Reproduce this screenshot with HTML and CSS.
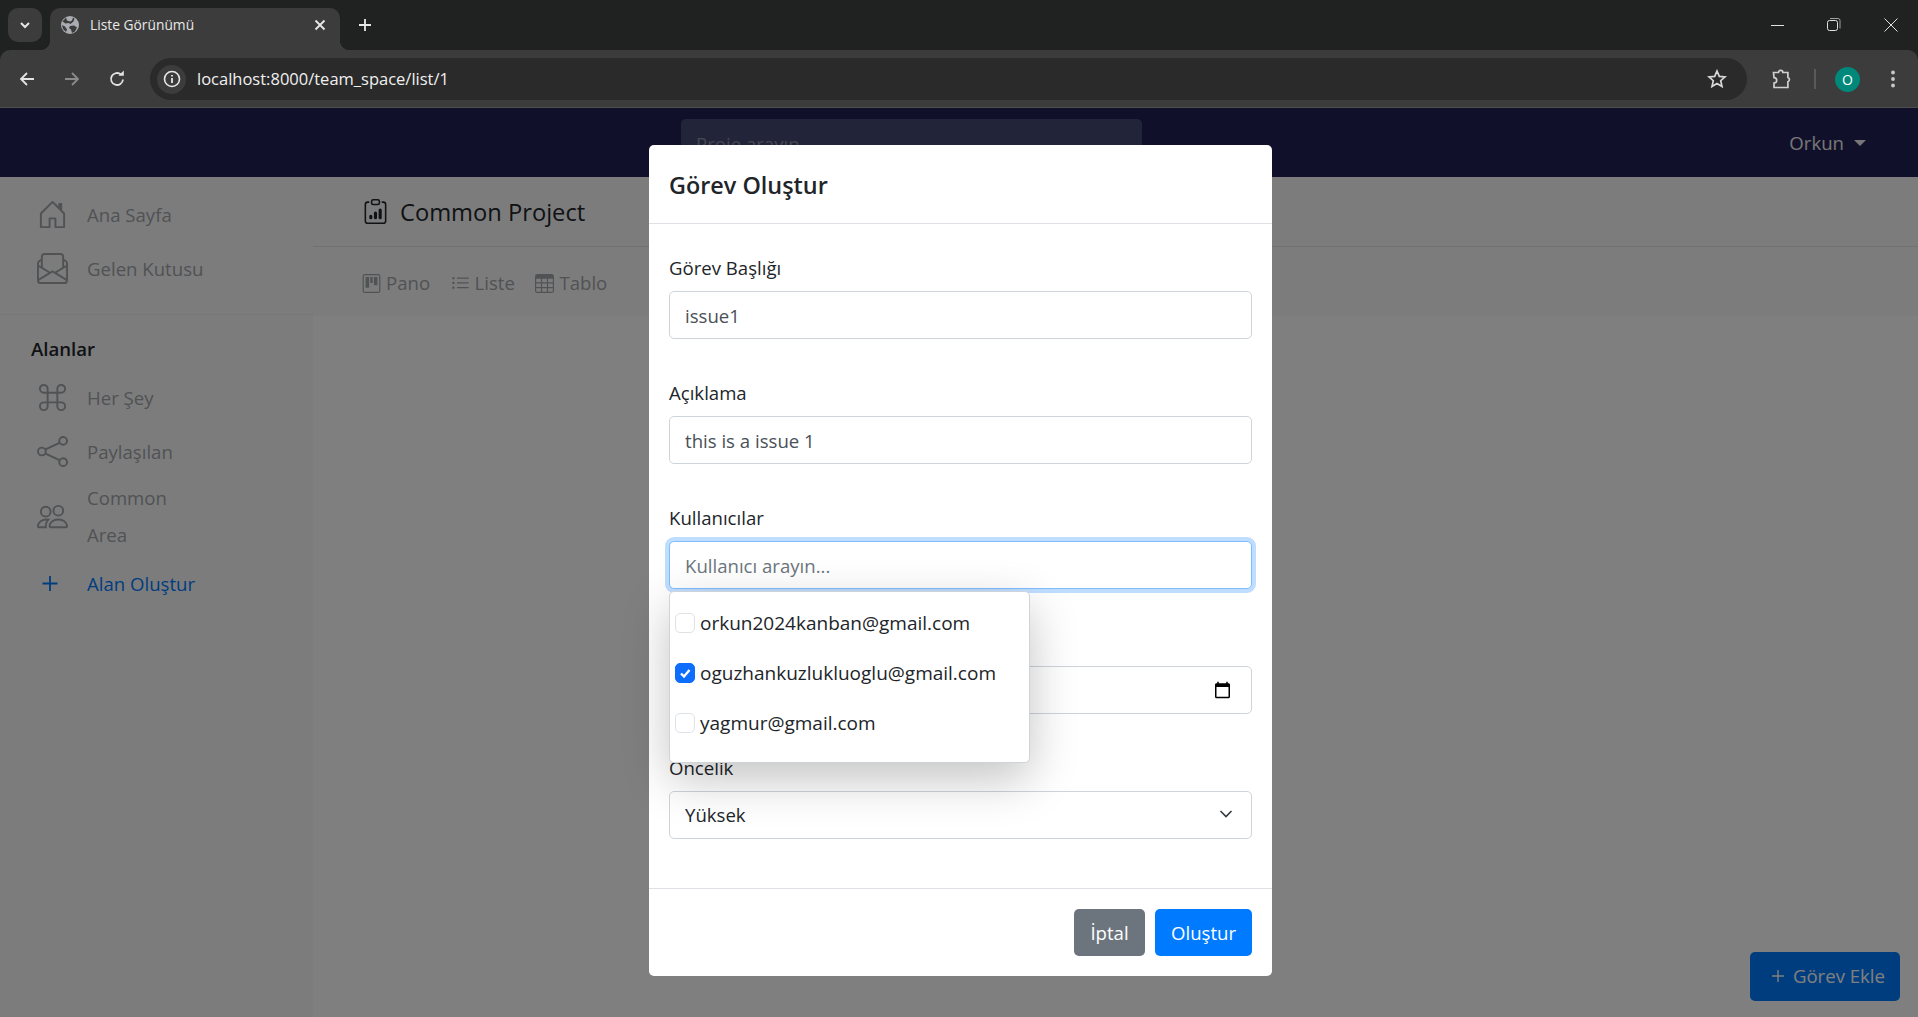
FILE: index.html
```html
<!DOCTYPE html>
<html lang="tr">
<head>
    <meta charset="UTF-8">
    <meta name="viewport" content="width=device-width, initial-scale=1.0">
    <title>Liste Görünümü</title>
    <link rel="stylesheet" href="styles.css">
</head>
<body>

    <!-- Browser window chrome -->
    <div class="tabstrip">
        <div class="tab-search">
            <svg width="14" height="14" viewBox="0 0 14 14"><path d="M3 5l4 4 4-4" fill="none" stroke="#e6e6e6" stroke-width="2"/></svg>
        </div>
        <div class="tab">
            <svg class="tab-favicon" width="18" height="18" viewBox="0 0 18 18">
                <circle cx="9" cy="9" r="9" fill="#a9adb2"/>
                <path d="M5 1.500l1 3 3 1 2-1 1-3 1.500 1-1 3-3 2.500-2-1-3 .5-3-2zM9 10l4-.5 3 2-2 4-3 1.500-1-3.500-2-1.500zM1 9l3 1.500 2 3-1 2.500-3-3z" fill="#3c3c3c"/>
            </svg>
            <span class="tab-title">Liste Görünümü</span>
            <svg class="tab-close" width="12" height="12" viewBox="0 0 12 12"><path d="M1.500 1.500l9 9M10.500 1.500l-9 9" stroke="#e8e8e8" stroke-width="1.800"/></svg>
        </div>
        <svg class="tab-new" width="14" height="14" viewBox="0 0 14 14"><path d="M7 1v12M1 7h12" stroke="#e8e8e8" stroke-width="1.800"/></svg>
        <div class="window-controls">
            <svg width="14" height="14" viewBox="0 0 14 14"><path d="M0 7.500h13" stroke="#e0e0e0"/></svg>
            <svg width="14" height="14" viewBox="0 0 14 14"><rect x=".5" y="2.500" width="10" height="10" rx="2" fill="none" stroke="#e0e0e0"/><path d="M3 .5h8a2 2 0 0 1 2 2v8" fill="none" stroke="#a0a0a0"/></svg>
            <svg width="14" height="14" viewBox="0 0 14 14"><path d="M.5.5l13 13M13.500.5l-13 13" stroke="#e0e0e0"/></svg>
        </div>
    </div>
    <div class="toolbar">
        <svg class="tool-back" width="18" height="18" viewBox="0 0 18 18"><path d="M16 9H3M9 3L3 9l6 6" fill="none" stroke="#e3e3e3" stroke-width="1.800"/></svg>
        <svg class="tool-forward" width="18" height="18" viewBox="0 0 18 18"><path d="M2 9h13M9 3l6 6-6 6" fill="none" stroke="#8b8b8b" stroke-width="1.800"/></svg>
        <svg class="tool-reload" width="18" height="18" viewBox="0 0 18 18"><path d="M15 9.500A6 6 0 1 1 13 4.500" fill="none" stroke="#e3e3e3" stroke-width="1.800"/><path d="M10.500 5.800h5.300V.5z" fill="#e3e3e3"/></svg>
        <div class="urlbar">
            <div class="url-info">
                <svg width="18" height="18" viewBox="0 0 18 18"><circle cx="9" cy="9" r="7.500" fill="none" stroke="#e8e8e8" stroke-width="1.600"/><path d="M9 8v5M9 5v1.600" stroke="#e8e8e8" stroke-width="1.800"/></svg>
            </div>
            <span class="url-text">localhost:8000/team_space/list/1</span>
            <svg class="url-star" width="20" height="20" viewBox="0 0 20 20"><path d="M10 2l2.300 5.400 5.700.5-4.300 3.800 1.300 5.700L10 14.400l-5 3 1.300-5.700L2 7.900l5.700-.5z" fill="none" stroke="#d8d8d8" stroke-width="1.700"/></svg>
        </div>
        <svg class="tool-ext" width="20" height="20" viewBox="0 0 20 20"><path d="M1.500 3.500h5a2.200 2.200 0 0 1 4.400 0h5v5a2.200 2.200 0 0 1 0 4.200v5.800H2v-4.500a2.700 2.700 0 0 0 0-5.400z" fill="none" stroke="#d0d0d0" stroke-width="1.700"/></svg>
        <div class="tool-sep"></div>
        <div class="avatar">O</div>
        <svg class="tool-menu" width="6" height="18" viewBox="0 0 6 18"><circle cx="3" cy="2.500" r="1.900" fill="#c8c8c8"/><circle cx="3" cy="9" r="1.900" fill="#c8c8c8"/><circle cx="3" cy="15.500" r="1.900" fill="#c8c8c8"/></svg>
    </div>

    <!-- Page -->
    <div class="page">
        <nav class="navbar">
            <input class="nav-search" type="text" placeholder="Proje arayın">
            <div class="nav-user">Orkun <span class="caret"></span></div>
        </nav>

        <div class="layout">
            <aside class="sidebar">
                <div class="side-top">
                    <a class="side-link">
                        <svg class="side-icon" viewBox="0 0 16 16"><path d="M8.354 1.146a.5.5 0 0 0-.708 0l-6 6A.5.5 0 0 0 1.500 7.500v7a.5.5 0 0 0 .5.5h4.500a.5.5 0 0 0 .5-.5v-4h2v4a.5.5 0 0 0 .5.5H14a.5.5 0 0 0 .5-.5v-7a.5.5 0 0 0-.146-.354L13 5.793V2.500a.5.5 0 0 0-.5-.5h-1a.5.5 0 0 0-.5.5v1.293L8.354 1.146zM2.500 14V7.707l5.500-5.500 5.500 5.500V14H10v-4a.5.5 0 0 0-.5-.5h-3a.5.5 0 0 0-.5.5v4H2.500z"/></svg>
                        <span>Ana Sayfa</span>
                    </a>
                    <a class="side-link">
                        <svg class="side-icon" viewBox="0 0 16 16"><path d="M4 0a2 2 0 0 0-2 2v1.133l-.941.502A2 2 0 0 0 0 5.400V14a2 2 0 0 0 2 2h12a2 2 0 0 0 2-2V5.400a2 2 0 0 0-1.059-1.765L14 3.133V2a2 2 0 0 0-2-2H4Zm10 4.267.47.25A1 1 0 0 1 15 5.400v.817l-1 .6v-2.550Zm-1 3.150-3.750 2.250L8 8.917l-1.250.75L3 7.417V2a1 1 0 0 1 1-1h8a1 1 0 0 1 1 1v5.417Zm-11-.6-1-.6V5.400a1 1 0 0 1 .53-.882L2 4.267v2.550Zm13 .566v5.734l-4.778-2.867L15 7.383Zm-.035 6.880A1 1 0 0 1 14 15H2a1 1 0 0 1-.965-.738L8 10.083l6.965 4.180ZM1 13.116V7.383l4.778 2.867L1 13.117Z"/></svg>
                        <span>Gelen Kutusu</span>
                    </a>
                </div>
                <div class="side-spaces">
                    <h6 class="side-heading">Alanlar</h6>
                    <a class="side-link">
                        <svg class="side-icon" viewBox="0 0 16 16"><path d="M3.500 2A1.500 1.500 0 0 1 5 3.500V5H3.500a1.500 1.500 0 1 1 0-3zM6 5V3.500A2.500 2.500 0 1 0 3.500 6H5v4H3.500A2.500 2.500 0 1 0 6 12.500V11h4v1.500a2.500 2.500 0 1 0 2.500-2.500H11V6h1.500A2.500 2.500 0 1 0 10 3.500V5H6zm4 1v4H6V6h4zm1-1V3.500A1.500 1.500 0 1 1 12.500 5H11zm0 6h1.500a1.500 1.500 0 1 1-1.500 1.500V11zm-6 0v1.500A1.500 1.500 0 1 1 3.500 11H5z"/></svg>
                        <span>Her Şey</span>
                    </a>
                    <a class="side-link">
                        <svg class="side-icon" viewBox="0 0 16 16"><path d="M13.500 1a1.500 1.500 0 1 0 0 3 1.500 1.500 0 0 0 0-3zM11 2.500a2.500 2.500 0 1 1 .603 1.628l-6.718 3.120a2.499 2.499 0 0 1 0 1.504l6.718 3.120a2.500 2.500 0 1 1-.488.876l-6.718-3.120a2.500 2.500 0 1 1 0-3.256l6.718-3.120A2.500 2.500 0 0 1 11 2.500zm-8.500 4a1.500 1.500 0 1 0 0 3 1.500 1.500 0 0 0 0-3zm11 5.500a1.500 1.500 0 1 0 0 3 1.500 1.500 0 0 0 0-3z"/></svg>
                        <span>Paylaşılan</span>
                    </a>
                    <a class="side-link side-link-wrap">
                        <svg class="side-icon" viewBox="0 0 16 16"><path d="M15 14s1 0 1-1-1-4-5-4-5 3-5 4 1 1 1 1h8Zm-7.978-1A.261.261 0 0 1 7 12.996c.001-.264.167-1.030.76-1.720C8.312 10.629 9.282 10 11 10c1.717 0 2.687.63 3.240 1.276.593.69.758 1.457.76 1.720l-.008.002a.274.274 0 0 1-.014.002H7.022ZM11 7a2 2 0 1 0 0-4 2 2 0 0 0 0 4Zm3-2a3 3 0 1 1-6 0 3 3 0 0 1 6 0ZM6.936 9.280a5.880 5.880 0 0 0-1.230-.247A7.350 7.350 0 0 0 5 9c-4 0-5 3-5 4 0 .667.333 1 1 1h4.216A2.238 2.238 0 0 1 5 13c0-1.010.377-2.042 1.090-2.904.243-.294.526-.569.846-.816ZM4.920 10A5.493 5.493 0 0 0 4 13H1c0-.26.164-1.030.76-1.724.545-.636 1.492-1.256 3.160-1.275ZM1.500 5.500a3 3 0 1 1 6 0 3 3 0 0 1-6 0Zm3-2a2 2 0 1 0 0 4 2 2 0 0 0 0-4Z"/></svg>
                        <span>Common<br>Area</span>
                    </a>
                    <a class="side-link side-link-new">
                        <svg class="side-icon" viewBox="0 0 31 31"><path d="M13 8v15M5.500 15.500h15" stroke="#007bff" stroke-width="1.800" fill="none"/></svg>
                        <span>Alan Oluştur</span>
                    </a>
                </div>
            </aside>

            <main class="main">
                <div class="project-head">
                    <svg class="project-icon" viewBox="0 0 16 16">
                        <path d="M4 11a1 1 0 1 1 2 0v1a1 1 0 1 1-2 0v-1zm6-4a1 1 0 1 1 2 0v5a1 1 0 1 1-2 0V7zM7 9a1 1 0 0 1 2 0v3a1 1 0 1 1-2 0V9z"/>
                        <path d="M4 1.500H3a2 2 0 0 0-2 2V14a2 2 0 0 0 2 2h10a2 2 0 0 0 2-2V3.500a2 2 0 0 0-2-2h-1v1h1a1 1 0 0 1 1 1V14a1 1 0 0 1-1 1H3a1 1 0 0 1-1-1V3.500a1 1 0 0 1 1-1h1v-1z"/>
                        <path d="M9.500 1a.5.5 0 0 1 .5.5v1a.5.5 0 0 1-.5.5h-3a.5.5 0 0 1-.5-.5v-1a.5.5 0 0 1 .5-.5h3zm-3-1A1.500 1.500 0 0 0 5 1.500v1A1.500 1.500 0 0 0 6.500 4h3A1.500 1.500 0 0 0 11 2.500v-1A1.500 1.500 0 0 0 9.500 0h-3z"/>
                    </svg>
                    <span class="project-name">Common Project</span>
                </div>
                <div class="views">
                    <a class="view-link">
                        <svg class="view-icon" viewBox="0 0 16 16"><path d="M13.500 1a1 1 0 0 1 1 1v12a1 1 0 0 1-1 1h-11a1 1 0 0 1-1-1V2a1 1 0 0 1 1-1h11zm-11-1a2 2 0 0 0-2 2v12a2 2 0 0 0 2 2h11a2 2 0 0 0 2-2V2a2 2 0 0 0-2-2h-11z"/><path d="M3 2.500h3v9H3zM7 2.500h2v5H7zM10 2.500h3v7h-3z"/></svg>
                        Pano
                    </a>
                    <a class="view-link">
                        <svg class="view-icon" viewBox="0 0 16 16"><path d="M5 11.500a.5.5 0 0 1 .5-.5h9a.5.5 0 0 1 0 1h-9a.5.5 0 0 1-.5-.5zm0-4a.5.5 0 0 1 .5-.5h9a.5.5 0 0 1 0 1h-9a.5.5 0 0 1-.5-.5zm0-4a.5.5 0 0 1 .5-.5h9a.5.5 0 0 1 0 1h-9a.5.5 0 0 1-.5-.5zm-3 1a1 1 0 1 0 0-2 1 1 0 0 0 0 2zm0 4a1 1 0 1 0 0-2 1 1 0 0 0 0 2zm0 4a1 1 0 1 0 0-2 1 1 0 0 0 0 2z"/></svg>
                        Liste
                    </a>
                    <a class="view-link">
                        <svg class="view-icon" viewBox="0 0 16 16"><path d="M0 2a2 2 0 0 1 2-2h12a2 2 0 0 1 2 2v12a2 2 0 0 1-2 2H2a2 2 0 0 1-2-2V2zm15 2h-4v3h4V4zm0 4h-4v3h4V8zm0 4h-4v3h3a1 1 0 0 0 1-1v-2zm-5 3v-3H6v3h4zm-5 0v-3H1v2a1 1 0 0 0 1 1h3zm-4-4h4V8H1v3zm0-4h4V4H1v3zm5-3v3h4V4H6zm4 4H6v3h4V8z"/></svg>
                        Tablo
                    </a>
                </div>
            </main>
        </div>

        <button class="add-task" type="button">
            <svg width="14" height="14" viewBox="0 0 14 14"><path d="M7 1v12M1 7h12" stroke="#fff" stroke-width="1.400"/></svg>
            Görev Ekle
        </button>

        <!-- Create task modal -->
        <div class="backdrop">
            <div class="modal">
                <div class="modal-header">
                    <h5 class="modal-title">Görev Oluştur</h5>
                </div>
                <form class="modal-body">
                    <div class="form-group">
                        <label class="form-label" for="title">Görev Başlığı</label>
                        <input class="form-control" id="title" type="text" value="issue1">
                    </div>
                    <div class="form-group">
                        <label class="form-label" for="desc">Açıklama</label>
                        <input class="form-control" id="desc" type="text" value="this is a issue 1">
                    </div>
                    <div class="form-group users-group">
                        <label class="form-label" for="users">Kullanıcılar</label>
                        <input class="form-control is-focus" id="users" type="text" placeholder="Kullanıcı arayın...">
                        <div class="user-menu">
                            <label class="user-item"><span class="check"></span>orkun2024kanban@gmail.com</label>
                            <label class="user-item">
                                <span class="check is-checked"><svg width="14" height="14" viewBox="0 0 14 14"><path d="M3 7.500l3 3 5.500-6.500" fill="none" stroke="#fff" stroke-width="2.400"/></svg></span>oguzhankuzlukluoglu@gmail.com
                            </label>
                            <label class="user-item"><span class="check"></span>yagmur@gmail.com</label>
                        </div>
                    </div>
                    <div class="form-group">
                        <!-- label of this field sits under the open menu -->
                        <div class="form-label"></div>
                        <input class="form-control date-control" id="due" type="date">
                    </div>
                    <div class="form-group">
                        <label class="form-label" for="priority">Öncelik</label>
                        <div class="select-wrap">
                            <select class="form-control form-select" id="priority">
                                <option>Yüksek</option>
                                <option>Orta</option>
                                <option>Düşük</option>
                            </select>
                            <svg class="select-arrow" width="16" height="16" viewBox="0 0 16 16"><path d="M2.500 5l5.500 5.500L13.500 5" fill="none" stroke="#343a40" stroke-width="1.600"/></svg>
                        </div>
                    </div>
                </form>
                <div class="modal-footer">
                    <button class="btn btn-secondary" type="button">İptal</button>
                    <button class="btn btn-primary" type="button">Oluştur</button>
                </div>
            </div>
        </div>
    </div>

</body>
</html>
```
FILE: styles.css
```css
* {
    box-sizing: border-box;
}

html, body {
    height: 100%;
}

body {
    margin: 0;
    overflow: hidden;
    font-family: "Open Sans", "Noto Sans", sans-serif;
    font-size: 18.6px;
    line-height: 30px;
    color: #212529;
    background-color: #202221;
}

/* Browser chrome */
.tabstrip {
    position: relative;
    display: flex;
    align-items: flex-end;
    height: 50px;
    padding-left: 8px;
    background-color: #202221;
}

.tab-search {
    display: flex;
    align-items: center;
    justify-content: center;
    width: 34px;
    height: 34px;
    margin-bottom: 8px;
    border-radius: 10px;
    background-color: #3c3c3c;
}

.tab {
    position: relative;
    display: flex;
    align-items: center;
    width: 290px;
    height: 42px;
    margin-left: 8px;
    padding: 0 14px 8px 11px;
    border-radius: 10px 10px 0 0;
    background-color: #3c3c3c;
}

.tab::before,
.tab::after {
    content: "";
    position: absolute;
    bottom: 0;
    width: 10px;
    height: 10px;
}

.tab::before {
    left: -10px;
    background: radial-gradient(circle at 0 0, transparent 10px, #3c3c3c 10.5px);
}

.tab::after {
    right: -10px;
    background: radial-gradient(circle at 100% 0, transparent 10px, #3c3c3c 10.5px);
}

.tab-title {
    flex: 1;
    margin-left: 11px;
    font-size: 13.800px;
    color: #e8e8e8;
}

.tab-new {
    align-self: center;
    margin: 0 0 0 18px;
}

.window-controls {
    display: flex;
    gap: 43px;
    margin-left: auto;
    padding: 0 20px 18px 0;
    align-self: flex-end;
}

.window-controls svg:first-child {
    margin-right: -1px;
}

.toolbar {
    display: flex;
    align-items: center;
    height: 58px;
    padding: 1px 16px 0 18px;
    border-radius: 10px 10px 0 0;
    border-bottom: 1px solid #4e4e4e;
    background-color: #3c3c3c;
}

.tool-forward,
.tool-reload {
    margin-left: 27px;
}

.urlbar {
    display: flex;
    align-items: center;
    width: 1597px;
    height: 42px;
    margin-left: 24px;
    padding: 0 20px 0 7px;
    border-radius: 21px;
    background-color: #2a2a2a;
}

.url-info {
    display: flex;
    align-items: center;
    justify-content: center;
    width: 29px;
    height: 29px;
    border-radius: 50%;
    background-color: #3c3c3c;
}

.url-text {
    flex: 1;
    margin-left: 11px;
    font-size: 16.500px;
    color: #f0f0f0;
}

.tool-ext {
    margin-left: 25px;
}

.tool-sep {
    width: 2px;
    height: 20px;
    margin-left: 22px;
    background-color: #5a5a5a;
}

.avatar {
    width: 25px;
    height: 25px;
    margin-left: 19px;
    border-radius: 50%;
    font-size: 14px;
    line-height: 25px;
    text-align: center;
    color: #fff;
    background-color: #00897b;
}

.tool-menu {
    margin-left: 30px;
}

/* Page */
.page {
    position: relative;
    height: 909px;
    overflow: hidden;
    display: flex;
    flex-direction: column;
}

.navbar {
    display: grid;
    grid-template-columns: 681px 461px 1fr;
    flex: none;
    height: 69px;
    background-color: #222054;
}

.nav-search {
    grid-column: 2;
    height: 48px;
    margin-top: 11px;
    padding: 0 15px;
    border: 0;
    border-radius: 5px;
    font: inherit;
    color: #fff;
    background-color: #444874;
}

.nav-search::placeholder {
    color: #8c8f9f;
}

.nav-user {
    grid-column: 3;
    justify-self: end;
    display: flex;
    align-items: center;
    gap: 10px;
    padding-right: 52px;
    color: #eee;
}

.caret {
    width: 0;
    height: 0;
    border-top: 6px solid #eee;
    border-left: 6px solid transparent;
    border-right: 6px solid transparent;
}

.layout {
    display: flex;
    flex: 1;
    min-height: 0;
    background-color: #fff;
}

.sidebar {
    flex: none;
    width: 313px;
    background-color: #f8f9fa;
}

.side-top {
    padding: 10px 0 18px;
    border-bottom: 1px solid #eceeef;
}

.side-spaces {
    padding-top: 19px;
}

.side-heading {
    margin: 0 0 6px;
    padding-left: 31px;
    font-size: 18.6px;
    font-weight: 600;
    line-height: 30px;
    color: #212529;
}

.side-link {
    display: flex;
    align-items: center;
    height: 54.500px;
    padding-left: 37px;
    line-height: 37px;
    color: #a2a5a8;
}

.side-link-wrap {
    height: auto;
    padding-bottom: 3px;
}

.side-link-new {
    color: #007bff;
}

.side-icon {
    flex: none;
    width: 31px;
    height: 31px;
    margin-right: 19px;
    fill: #a2a5a8;
}

.main {
    flex: 1;
    display: flex;
    flex-direction: column;
}

.project-head {
    display: flex;
    align-items: center;
    flex: none;
    height: 70px;
    padding-left: 50px;
    border-bottom: 1px solid #dee2e6;
    background-color: #f8f9fa;
}

.project-icon {
    width: 25px;
    height: 25px;
    fill: #212529;
}

.project-name {
    margin-left: 12px;
    font-size: 23.700px;
    color: #212529;
}

.views {
    display: flex;
    gap: 20.500px;
    flex: none;
    height: 69px;
    padding: 17px 0 0 49px;
    background-color: #f8f9fa;
}

.view-link {
    display: flex;
    align-items: center;
    gap: 5px;
    height: 38px;
    color: #a2a5a8;
}

.view-icon {
    width: 19px;
    height: 19px;
    fill: #a2a5a8;
}

.add-task {
    position: absolute;
    right: 18px;
    bottom: 16px;
    display: flex;
    align-items: center;
    gap: 8px;
    height: 49px;
    padding: 0 15px 2px 21px;
    border: 0;
    border-radius: 5px;
    font: inherit;
    color: #fff;
    background-color: #007bff;
}

/* Modal */
.backdrop {
    position: absolute;
    inset: 0;
    display: flex;
    justify-content: center;
    padding: 37px 0 0 3px;
    background-color: rgba(0, 0, 0, 0.5);
}

.modal {
    width: 623px;
    height: 831px;
    display: flex;
    flex-direction: column;
    border-radius: 5px;
    background-color: #fff;
}

.modal-header {
    flex: none;
    height: 79px;
    padding: 22px 20px 0;
    border-bottom: 1px solid #dee2e6;
}

.modal-title {
    margin: 0;
    font-size: 23.400px;
    font-weight: 600;
    line-height: 37px;
}

.modal-body {
    flex: 1;
    padding: 29px 20px 0;
}

.form-group {
    margin-bottom: 39px;
}

.users-group {
    position: relative;
}

.form-label {
    display: block;
    height: 30px;
    margin-bottom: 8px;
}

.form-control {
    display: block;
    width: 100%;
    height: 48px;
    padding: 0 15px;
    border: 1px solid #ced4da;
    border-radius: 5px;
    font: inherit;
    color: #495057;
    background-color: #fff;
    outline: none;
}

.form-control::placeholder {
    color: #6c757d;
}

.is-focus {
    border-color: #80bdff;
    box-shadow: 0 0 0 4px rgba(0, 123, 255, 0.25);
}

.date-control {
    padding-right: 17px;
}

.select-wrap {
    position: relative;
}

.form-select {
    appearance: none;
    color: #212529;
}

.select-arrow {
    position: absolute;
    top: 15px;
    right: 18px;
}

.user-menu {
    position: absolute;
    z-index: 5;
    top: 88px;
    left: 0;
    width: 361px;
    height: 172px;
    padding: 6px 0 0 5px;
    border: 1px solid #ced4da;
    border-radius: 5px;
    font-size: 19px;
    background-color: #fff;
    box-shadow: 0 16px 48px rgba(0, 0, 0, 0.24);
}

.user-item {
    display: flex;
    align-items: center;
    height: 50px;
    white-space: nowrap;
}

.check {
    display: flex;
    align-items: center;
    justify-content: center;
    flex: none;
    width: 20px;
    height: 20px;
    margin-right: 5px;
    border: 1px solid #dee2e6;
    border-radius: 5px;
    background-color: #fff;
}

.is-checked {
    border-color: #0d6efd;
    background-color: #0d6efd;
}

.modal-footer {
    display: flex;
    justify-content: flex-end;
    gap: 10px;
    flex: none;
    height: 88px;
    padding: 20px 20px 0;
    border-top: 1px solid #dee2e6;
}

.btn {
    height: 47px;
    padding: 0 15px;
    border: 0;
    border-radius: 5px;
    font: inherit;
    color: #fff;
}

.btn-secondary {
    width: 71px;
    background-color: #6c757d;
}

.btn-primary {
    width: 97px;
    background-color: #007bff;
}
```
